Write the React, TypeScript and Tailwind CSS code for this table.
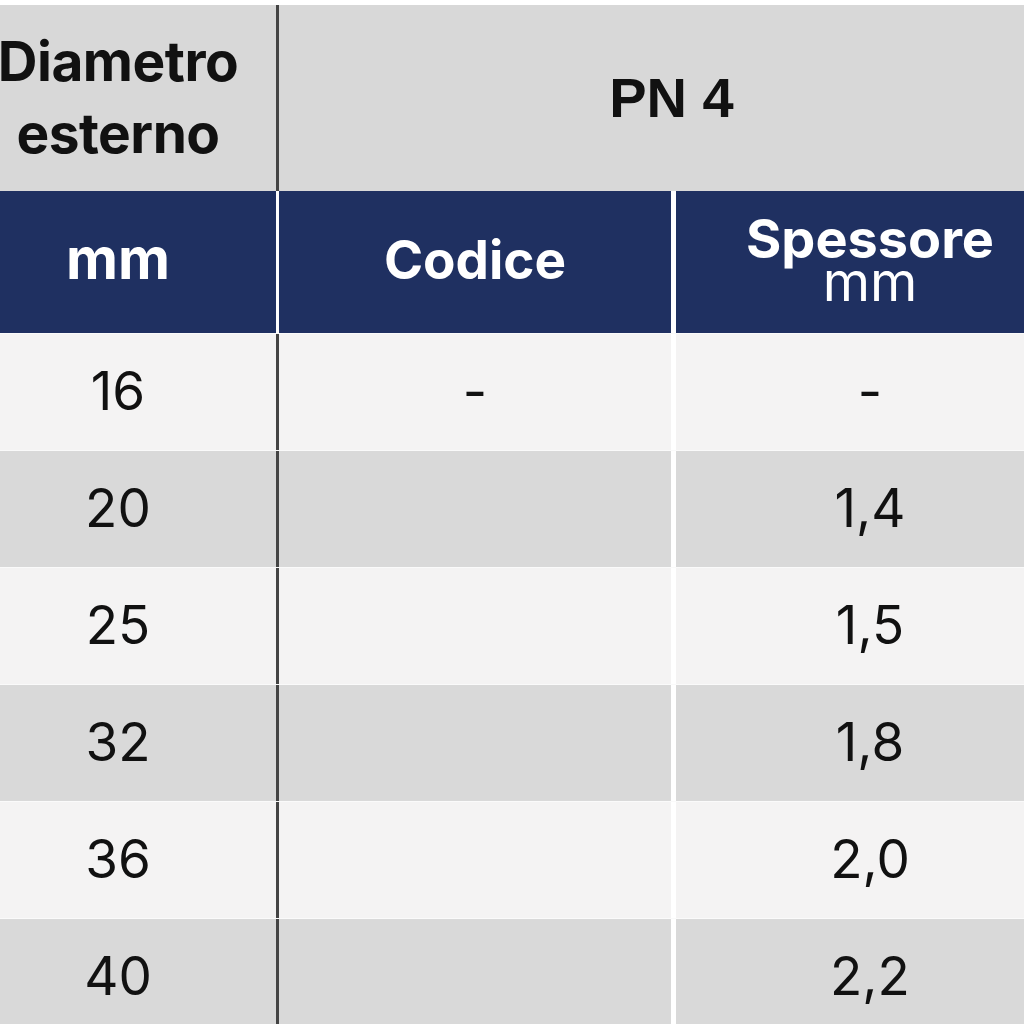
import React from "react";

const rows = [
  { d: "16", c: "-", s: "-" },
  { d: "20", c: "", s: "1,4" },
  { d: "25", c: "", s: "1,5" },
  { d: "32", c: "", s: "1,8" },
  { d: "36", c: "", s: "2,0" },
  { d: "40", c: "", s: "2,2" },
];

const App = () => {
  return (
    <div className="w-[1024px] h-[1024px] overflow-hidden bg-white pt-[5px] font-['Inter',sans-serif] text-[#111]">
      <div className="w-[1104px] -ml-[40px] flex flex-col">
        {/* top header */}
        <div className="flex h-[186px] bg-[#d8d8d8]">
          <div className="w-[316px] flex flex-col items-center justify-center font-bold text-[55px] leading-[72px] tracking-[-0.5px] pb-[2px]">
            <span>Diametro</span>
            <span>esterno</span>
          </div>
          <div className="w-[3px] bg-[#444]" />
          <div className="flex-1 flex items-center justify-center font-['Liberation_Sans',sans-serif] font-bold text-[56px]">
            PN 4
          </div>
        </div>

        {/* navy header */}
        <div className="flex h-[142px] bg-[#1f3061] text-white font-bold">
          <div className="w-[316px] flex items-center justify-center text-[57px] pb-[6px]">
            mm
          </div>
          <div className="w-[3px] bg-white" />
          <div className="w-[392px] flex items-center justify-center text-[53px] pb-[2px]">
            Codice
          </div>
          <div className="w-[5px] bg-white" />
          <div className="w-[388px] flex flex-col items-center justify-center pb-[8px]">
            <span className="text-[54px] leading-[48px]">Spessore</span>
            <span className="text-[54px] leading-[38px] font-normal">mm</span>
          </div>
        </div>

        {/* data */}
        {rows.map((row, index) => (
          <div
            key={index}
            className={`flex h-[117px] border-t border-[#fafafa] text-[53px] ${
              index % 2 === 0 ? "bg-[#f4f3f3]" : "bg-[#d9d9d9]"
            }`}
          >
            <div className="w-[316px] flex items-center justify-center">{row.d}</div>
            <div className="w-[3px] bg-[#444]" />
            <div className="w-[392px] flex items-center justify-center">{row.c}</div>
            <div className="w-[5px] bg-white" />
            <div className="w-[388px] flex items-center justify-center">{row.s}</div>
          </div>
        ))}
      </div>
    </div>
  );
};

export default App;
